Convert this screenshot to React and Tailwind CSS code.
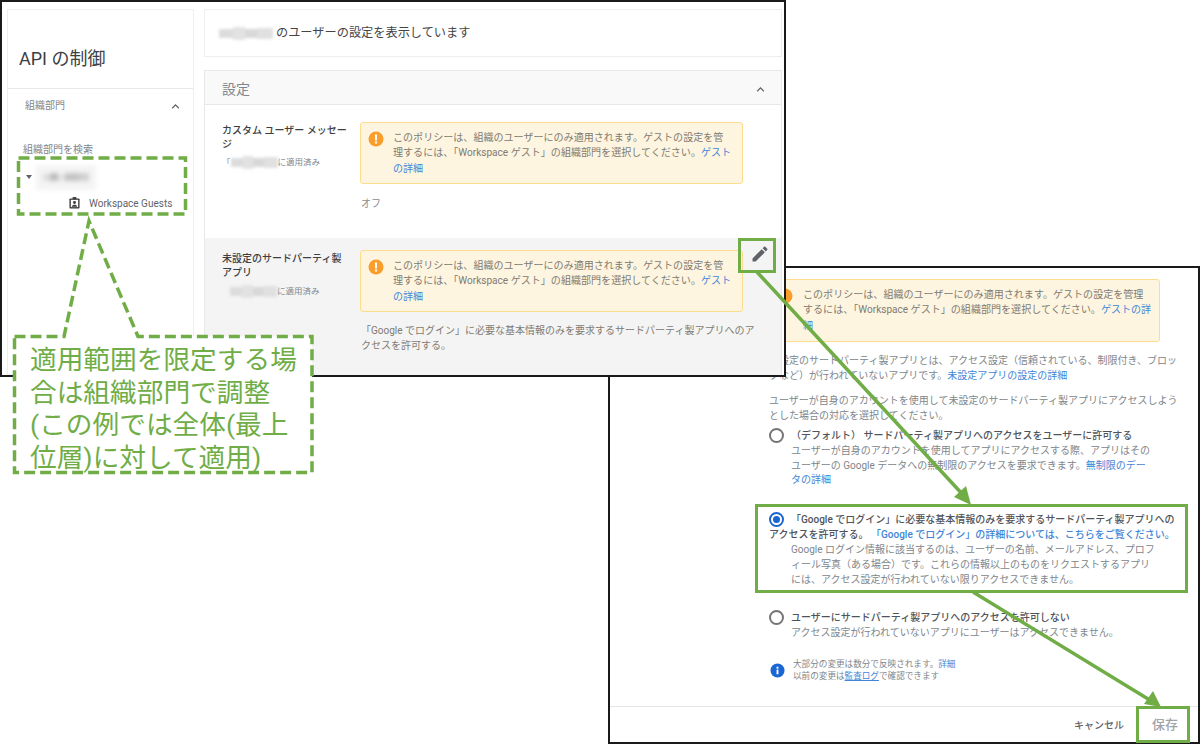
import React from 'react';

const Chevron = ({ className }) => (
  <svg viewBox="0 0 24 24" className={className} fill="currentColor">
    <path d="M12 8l-6 6 1.41 1.41L12 10.83l4.59 4.58L18 14z" />
  </svg>
);

const Blur = ({ className }) => (
  <span className={`flex items-center blur-[1.6px] ${className}`}>
    <span className="w-[14px] h-[9px] bg-[#dcdcdc]" />
    <span className="w-[12px] h-[13px] bg-[#e2e2e2]" />
    <span className="w-[12px] h-[9px] bg-[#d8d8d8]" />
    <span className="w-[16px] h-[11px] bg-[#e0e0e0]" />
  </span>
);

const OrgBlur = () => (
  <span className="relative ml-[4px] w-[60px] h-[25px] bg-[#f4f4f4] blur-[2px] flex items-center pl-[7px]">
    <span className="w-[7px] h-[7px] bg-[#dddddd]" />
    <span className="w-[8px] h-[8px] bg-[#bdbdbd]" />
    <span className="w-[7px] h-[7px] bg-[#e4e4e4]" />
    <span className="w-[14px] h-[8px] bg-[#c4c4c4]" />
    <span className="w-[10px] h-[8px] bg-[#d0d0d0]" />
  </span>
);

const WarnIcon = ({ className }) => (
  <svg viewBox="0 0 16 16" className={className}>
    <circle cx="8" cy="8" r="7.5" fill="#fa9d2a" />
    <rect x="7" y="3.5" width="2" height="6" fill="#fff" />
    <rect x="7" y="10.5" width="2" height="2" fill="#fff" />
  </svg>
);

const Warn = ({ className, children }) => (
  <div className={`relative bg-[#fef5e0] border border-[#fddc8c] rounded-[3px] text-[#807b72] text-[10.06px] leading-[15.6px] py-[6.5px] ${className}`}>
    {children}
  </div>
);

const Radio = ({ on }) => (
  on ? (
    <span className="w-[15px] h-[15px] rounded-full border-2 border-[#1a66d2] flex items-center justify-center shrink-0">
      <span className="w-[7px] h-[7px] rounded-full bg-[#1a66d2]" />
    </span>
  ) : (
    <span className="w-[15px] h-[15px] rounded-full border-2 border-[#757575] shrink-0" />
  )
);

const link = 'text-[#4285d6]';

const TopWindow = () => (
  <div className="absolute left-0 top-0 w-[786px] h-[377px] border-2 border-[#1a1a1a] bg-white overflow-hidden flex gap-[10px] pl-[5px] pt-[7px] z-10">
    <aside className="w-[187px] shrink-0 border border-[#eeeeee] flex flex-col">
      <div className="h-[79px] border-b border-[#e8e8e8] px-[11px] pt-[36px] text-[18px] leading-[26px] text-[#3c4043]">API の制御</div>
      <div className="flex items-center justify-between pl-[17px] pr-[10px] pt-[8px] text-[10px] leading-[18px] text-[#80868b]">
        <span>組織部門</span>
        <Chevron className="w-[15px] h-[15px] text-[#5f6368]" />
      </div>
      <div className="pl-[15px] mt-[27px] text-[10px] leading-[16px] text-[#80868b]">組織部門を検索</div>
      <div className="flex items-center pl-[18px] mt-[6px] h-[26px]">
        <span className="w-0 h-0 border-x-[3.5px] border-x-transparent border-t-[4px] border-t-[#5f6368]" />
        <OrgBlur />
      </div>
      <div className="flex items-center pl-[61px] mt-[5px] h-[16px] font-['Roboto'] text-[10px] text-[#5f6368]">
        <svg viewBox="0 0 12 13" className="w-[11px] h-[12px] mr-[9px]" fill="none">
          <rect x="0.5" y="1.5" width="11" height="11" rx="1" fill="#3c3c3c" />
          <rect x="2" y="3" width="8" height="8" fill="#fff" />
          <circle cx="6" cy="6" r="1.6" fill="#3c3c3c" />
          <path d="M3 10.6c.4-1.7 1.6-2.2 3-2.2s2.6.5 3 2.2z" fill="#3c3c3c" />
          <rect x="4" y="0" width="4" height="2.5" fill="#3c3c3c" />
        </svg>
        Workspace Guests
      </div>
    </aside>

    <main className="w-[578px] shrink-0 flex flex-col gap-[13px]">
      <div className="h-[48px] border border-[#eeeeee] flex items-center pl-[14px] pt-[1px] text-[12.2px] text-[#444]">
        <Blur className="w-[57px]" />
        <span>のユーザーの設定を表示しています</span>
      </div>
      <section className="flex-1 border border-[#e8e8e8] border-b-0 flex flex-col">
        <header className="h-[34px] shrink-0 bg-[#f9f9f9] border-b border-[#e8e8e8] flex items-center justify-between pl-[17px] pr-[13px] pt-[3px] text-[14px] text-[#80868b]">
          <span>設定</span>
          <Chevron className="w-[15px] h-[15px] text-[#5f6368]" />
        </header>
        <div className="h-[133px] shrink-0 flex pl-[17px] pt-[17px]">
          <div className="w-[138px] shrink-0 pt-[2px]">
            <p className="text-[10px] leading-[14px] font-medium text-[#3c4043]">カスタム ユーザー メッセー<br />ジ</p>
            <div className="flex items-center mt-[2px] text-[8.5px] leading-[16px] text-[#80868b]">
              <span>「</span><Blur className="w-[47px]" /><span>に適用済み</span>
            </div>
          </div>
          <div>
            <Warn className="w-[383px] h-[62px] pl-[32px]">
              <WarnIcon className="absolute left-[7px] top-[8px] w-[16px] h-[16px]" />
              このポリシーは、組織のユーザーにのみ適用されます。ゲストの設定を管<br />
              理するには、「Workspace ゲスト」の組織部門を選択してください。<span className={link}>ゲスト<br />の詳細</span>
            </Warn>
            <p className="mt-[13px] ml-[1px] text-[10px] leading-[14px] text-[#888c90]">オフ</p>
          </div>
        </div>
        <div className="flex-1 relative bg-[#f4f4f4] flex pl-[17px] pt-[12px]">
          <div className="w-[138px] shrink-0 pt-[2px]">
            <p className="text-[10px] leading-[14px] font-medium text-[#3c4043]">未設定のサードパーティ製<br />アプリ</p>
            <div className="flex items-center mt-[3px] text-[8.5px] leading-[16px] text-[#80868b]">
              <span className="w-[8px]" /><Blur className="w-[47px]" /><span>に適用済み</span>
            </div>
          </div>
          <div>
            <Warn className="w-[383px] h-[62px] pl-[32px]">
              <WarnIcon className="absolute left-[7px] top-[8px] w-[16px] h-[16px]" />
              このポリシーは、組織のユーザーにのみ適用されます。ゲストの設定を管<br />
              理するには、「Workspace ゲスト」の組織部門を選択してください。<span className={link}>ゲスト<br />の詳細</span>
            </Warn>
            <p className="mt-[11px] ml-[1px] w-[400px] text-[10px] leading-[15px] text-[#807b72]">
              「Google でログイン」に必要な基本情報のみを要求するサードパーティ製アプリへのア<br />クセスを許可する。
            </p>
          </div>
          <svg viewBox="0 0 24 24" className="absolute right-[11px] top-[6px] w-[20px] h-[20px]" fill="#5f6368">
            <path d="M3 17.25V21h3.75L17.81 9.94l-3.75-3.75L3 17.25zM20.71 7.04c.39-.39.39-1.02 0-1.41l-2.34-2.34c-.39-.39-1.02-.39-1.41 0l-1.83 1.83 3.75 3.75 1.83-1.83z" />
          </svg>
        </div>
      </section>
    </main>
  </div>
);

const Option = ({ on, title, children, className }) => (
  <div className={className}>
    <div className="flex items-center gap-[7px] leading-[15px] text-[#50545a] font-medium">
      <Radio on={on} />
      <span className="whitespace-nowrap">{title}</span>
    </div>
    <p className="ml-[22px] mt-[1px] leading-[14.7px] text-[#80868b] whitespace-nowrap">{children}</p>
  </div>
);

const BottomWindow = () => (
  <div className="absolute left-[608px] top-[266px] w-[592px] h-[478px] border-2 border-[#1a1a1a] bg-white flex flex-col text-[10px]">
    <div className="flex-1 pl-[159px] pt-[11px]">
      <Warn className="w-[391px] h-[63px] pl-[33px]">
        <WarnIcon className="absolute left-[7px] top-[8px] w-[16px] h-[16px]" />
        このポリシーは、組織のユーザーにのみ適用されます。ゲストの設定を管理<br />
        するには、「Workspace ゲスト」の組織部門を選択してください。<span className={link}>ゲストの詳<br />細</span>
      </Warn>
      <p className="mt-[11px] leading-[15px] text-[#80868b] whitespace-nowrap">
        未設定のサードパーティ製アプリとは、アクセス設定（信頼されている、制限付き、ブロッ<br />
        クなど）が行われていないアプリです。<span className={link}>未設定アプリの設定の詳細</span>
      </p>
      <p className="mt-[11px] leading-[14.5px] text-[#80868b] whitespace-nowrap">
        ユーザーが自身のアカウントを使用して未設定のサードパーティ製アプリにアクセスしよう<br />
        とした場合の対応を選択してください。
      </p>
      <Option on={false} className="mt-[5px]" title="（デフォルト） サードパーティ製アプリへのアクセスをユーザーに許可する">
        ユーザーが自身のアカウントを使用してアプリにアクセスする際、アプリはその<br />
        ユーザーの Google データへの無制限のアクセスを要求できます。<span className={link}>無制限のデー<br />タの詳細</span>
      </Option>
      <div className="mt-[24px]">
        <div className="flex items-center gap-[7px] leading-[15px] text-[#50545a] font-medium">
          <Radio on />
          <span className="whitespace-nowrap">「Google でログイン」に必要な基本情報のみを要求するサードパーティ製アプリへの</span>
        </div>
        <p className="leading-[15px] font-medium text-[#50545a] whitespace-nowrap">
          アクセスを許可する。&nbsp;<span className={link}>「Google でログイン」の詳細については、こちらをご覧ください。</span>
        </p>
        <p className="ml-[22px] mt-[1px] leading-[14.7px] text-[#80868b] whitespace-nowrap">
          Google ログイン情報に該当するのは、ユーザーの名前、メールアドレス、プロフ<br />
          ィール写真（ある場合）です。これらの情報以上のものをリクエストするアプリ<br />
          には、アクセス設定が行われていない限りアクセスできません。
        </p>
      </div>
      <Option on={false} className="mt-[23px]" title="ユーザーにサードパーティ製アプリへのアクセスを許可しない">
        アクセス設定が行われていないアプリにユーザーはアクセスできません。
      </Option>
      <div className="flex items-center gap-[8px] mt-[17px] ml-[1px] text-[8.6px] leading-[12.5px] text-[#80868b]">
        <svg viewBox="0 0 16 16" className="w-[15px] h-[15px] shrink-0">
          <circle cx="8" cy="8" r="7.5" fill="#1a66d2" />
          <rect x="7" y="7" width="2" height="5" fill="#fff" />
          <rect x="7" y="4" width="2" height="2" fill="#fff" />
        </svg>
        <p>大部分の変更は数分で反映されます。<span className={link}>詳細</span><br />以前の変更は<span className={`${link} underline`}>監査ログ</span>で確認できます</p>
      </div>
    </div>
    <footer className="h-[36px] shrink-0 border-t border-[#e6e6e6] flex items-center justify-end gap-[28px] pr-[20px] pt-[1px] text-[10px]">
      <span className="font-medium text-[#5f6368]">キャンセル</span>
      <span className="font-medium text-[#a0a4a8] text-[13px]">保存</span>
    </footer>
  </div>
);

export default function App() {
  return (
    <div className="relative w-[1200px] h-[744px] bg-white overflow-hidden font-['Roboto','Noto_Sans_CJK_JP',sans-serif]">
      <BottomWindow />
      <TopWindow />

      <svg viewBox="0 0 1200 744" className="absolute inset-0 w-[1200px] h-[744px] z-20" fill="none">
        <path d="M757 272L965 497" stroke="#70ad47" strokeWidth="3.5" />
        <path d="M971 505L954 497L966 486Z" fill="#70ad47" />
        <path d="M973 592L1153 702" stroke="#70ad47" strokeWidth="3.5" />
        <path d="M1161 707L1144 704L1153 691Z" fill="#70ad47" />
        <rect x="18.5" y="158" width="167" height="56" stroke="#70ad47" strokeWidth="3.5" strokeDasharray="11 5" />
        <path d="M14.5 336.5H64L89 221L138 336.5H312V472.5H14.5Z" fill="#fff" stroke="#70ad47" strokeWidth="3.5" strokeDasharray="11 5" />
      </svg>

      <div className="absolute left-[755px] top-[504px] w-[433px] h-[89px] border-[3px] border-[#70ad47] z-20" />
      <div className="absolute left-[738px] top-[238px] w-[38px] h-[35px] border-[3px] border-[#70ad47] z-20" />
      <div className="absolute left-[1136px] top-[706px] w-[54px] h-[37px] border-[3px] border-[#70ad47] z-20" />

      <div className="absolute left-[30px] top-[344px] w-[275px] text-[26.7px] leading-[32.5px] text-[#70ad47] z-30">
        適用範囲を限定する場<br />合は組織部門で調整<br />(この例では全体(最上<br />位層)に対して適用)
      </div>
    </div>
  );
}
